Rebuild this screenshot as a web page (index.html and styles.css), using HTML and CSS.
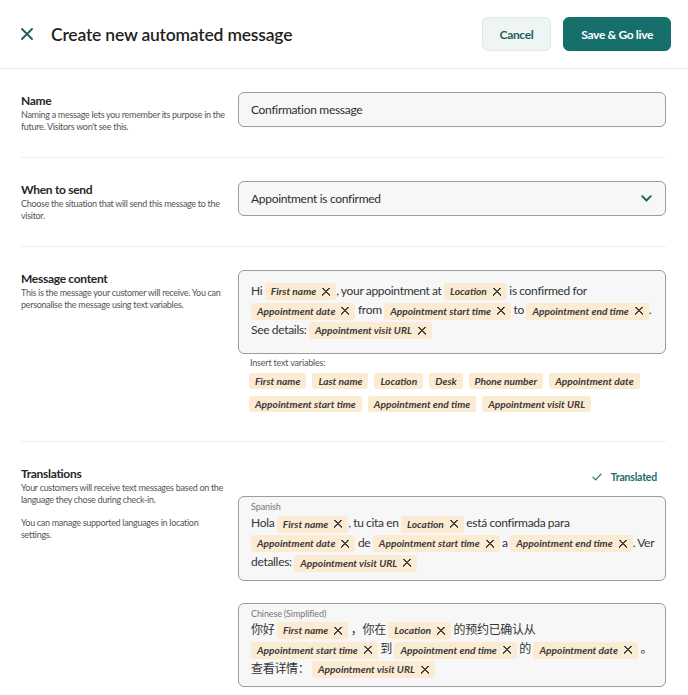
FILE: index.html
```html
<!DOCTYPE html>
<html lang="en">
<head>
    <meta charset="UTF-8">
    <meta name="viewport" content="width=device-width, initial-scale=1.0">
    <title>Create new automated message</title>
    <link rel="stylesheet" href="styles.css">
</head>
<body>
    <header class="topbar">
        <div class="topbar-title">
            <button class="close-btn" aria-label="Close">
                <svg width="12" height="12" viewBox="0 0 12 12"><path d="M1 1L11 11M11 1L1 11" stroke="currentColor" stroke-width="1.8" stroke-linecap="round"/></svg>
            </button>
            <h1>Create new automated message</h1>
        </div>
        <div class="topbar-actions">
            <button class="btn btn-secondary">Cancel</button>
            <button class="btn btn-primary">Save &amp; Go live</button>
        </div>
    </header>

    <main class="form">
        <section class="field-row">
            <div class="field-info">
                <h2>Name</h2>
                <p>Naming a message lets you remember its purpose in the future. Visitors won't see this.</p>
            </div>
            <div class="field-control">
                <input class="text-input" type="text" value="Confirmation message">
            </div>
        </section>

        <section class="field-row">
            <div class="field-info">
                <h2>When to send</h2>
                <p>Choose the situation that will send this message to the visitor.</p>
            </div>
            <div class="field-control">
                <div class="select">
                    <span>Appointment is confirmed</span>
                    <svg width="11" height="7" viewBox="0 0 11 7"><path d="M1.2 1.2L5.5 5.5L9.8 1.2" fill="none" stroke="currentColor" stroke-width="1.8" stroke-linecap="round" stroke-linejoin="round"/></svg>
                </div>
            </div>
        </section>

        <section class="field-row">
            <div class="field-info">
                <h2>Message content</h2>
                <p>This is the message your customer will receive. You can personalise the message using text variables.</p>
            </div>
            <div class="field-control">
                <div class="editor">
                    Hi <span class="chip">First name <i class="chip-x"></i></span>, your appointment at <span class="chip">Location <i class="chip-x"></i></span> is confirmed for
                    <span class="chip">Appointment date <i class="chip-x"></i></span> from <span class="chip">Appointment start time <i class="chip-x"></i></span> to <span class="chip">Appointment end time <i class="chip-x"></i></span>.
                    See details: <span class="chip">Appointment visit URL <i class="chip-x"></i></span>
                </div>
                <div class="variables-label">Insert text variables:</div>
                <div class="variables">
                    <span class="var">First name</span>
                    <span class="var">Last name</span>
                    <span class="var">Location</span>
                    <span class="var">Desk</span>
                    <span class="var">Phone number</span>
                    <span class="var">Appointment date</span>
                    <span class="var">Appointment start time</span>
                    <span class="var">Appointment end time</span>
                    <span class="var">Appointment visit URL</span>
                </div>
            </div>
        </section>

        <section class="field-row">
            <div class="field-info">
                <h2>Translations</h2>
                <p>Your customers will receive text messages based on the language they chose during check-in.</p>
                <p class="spaced">You can manage supported languages in location settings.</p>
            </div>
            <div class="field-control">
                <div class="translated">
                    <svg width="10" height="8" viewBox="0 0 10 8"><path d="M1 4.2L3.6 6.8L9 1.2" fill="none" stroke="currentColor" stroke-width="1.2" stroke-linecap="round" stroke-linejoin="round"/></svg>
                    Translated
                </div>
                <div class="editor translation">
                    <div class="lang">Spanish</div>
                    Hola <span class="chip">First name <i class="chip-x"></i></span>, tu cita en <span class="chip">Location <i class="chip-x"></i></span> está confirmada para
                    <span class="chip">Appointment date <i class="chip-x"></i></span> de <span class="chip">Appointment start time <i class="chip-x"></i></span> a <span class="chip">Appointment end time <i class="chip-x"></i></span>. Ver detalles: <span class="chip">Appointment visit URL <i class="chip-x"></i></span>
                </div>
                <div class="editor translation">
                    <div class="lang">Chinese (Simplified)</div>
                    你好 <span class="chip">First name <i class="chip-x"></i></span> ，你在 <span class="chip">Location <i class="chip-x"></i></span> 的预约已确认从
                    <span class="chip">Appointment start time <i class="chip-x"></i></span> 到 <span class="chip">Appointment end time <i class="chip-x"></i></span> 的 <span class="chip">Appointment date <i class="chip-x"></i></span> 。查看详情： <span class="chip">Appointment visit URL <i class="chip-x"></i></span>
                </div>
            </div>
        </section>
    </main>
</body>
</html>
```

FILE: styles.css
```css
body {
    font-family: Lato, "Noto Sans CJK SC", sans-serif;
    margin: 0;
    padding: 0;
    background-color: #fff;
    color: #2b2b2b;
}
button {
    font-family: inherit;
}
.topbar {
    display: flex;
    justify-content: space-between;
    align-items: center;
    height: 69px;
    padding: 0 17px 0 21px;
    border-bottom: 1px solid #eeeeee;
    box-sizing: border-box;
}
.topbar-title {
    display: flex;
    align-items: center;
    gap: 18px;
}
.close-btn {
    background: none;
    border: none;
    padding: 0;
    color: #1b5e5a;
    display: flex;
}
.topbar h1 {
    margin: 0;
    font-size: 17.5px;
    letter-spacing: -0.2px;
    font-weight: 600;
    color: #1f1f1f;
}
.topbar-actions {
    display: flex;
    gap: 12px;
}
.btn {
    height: 34px;
    border-radius: 6px;
    font-size: 12px;
    letter-spacing: -0.35px;
    font-weight: 700;
    padding: 0 17px;
    cursor: pointer;
}
.btn-secondary {
    background-color: #eef5f3;
    border: 1px solid #dfe9e6;
    color: #1c5f5c;
}
.btn-primary {
    background-color: #166f6b;
    border: 1px solid #166f6b;
    color: #fff;
}
.form {
    padding: 0 22px 0 21px;
}
.field-row {
    display: grid;
    grid-template-columns: 205px 1fr;
    column-gap: 12px;
    padding: 23px 0 24px;
    border-bottom: 1px solid #efefef;
}
.field-row:last-child {
    border-bottom: none;
}
.field-control {
    padding-bottom: 5px;
}
.field-info h2 {
    margin: 0;
    font-size: 12px;
    letter-spacing: -0.3px;
    line-height: 17px;
    font-weight: 700;
    color: #262626;
}
.field-info p {
    margin: 0;
    font-size: 9px;
    letter-spacing: -0.3px;
    line-height: 12px;
    color: #555;
}
.field-info p.spaced {
    margin-top: 11px;
}
.text-input,
.select {
    width: 100%;
    box-sizing: border-box;
    height: 35px;
    border: 1px solid #9d9d9d;
    border-radius: 6px;
    background-color: #f7f7f7;
    padding: 0 12px;
    font-family: inherit;
    font-size: 12px;
    letter-spacing: -0.3px;
    color: #2e2e2e;
}
.select {
    display: flex;
    align-items: center;
    justify-content: space-between;
}
.select svg {
    color: #1b5e5a;
    margin-right: 1px;
}
.editor {
    border: 1px solid #9d9d9d;
    border-radius: 6px;
    background-color: #f7f7f7;
    padding: 10px 6px 14px 12px;
    font-size: 12px;
    letter-spacing: -0.3px;
    word-spacing: -0.3px;
    line-height: 19px;
    color: #333;
}
.chip {
    display: inline-flex;
    align-items: center;
    gap: 6px;
    height: 17px;
    padding: 0 6px;
    border-radius: 3px;
    background-color: #fcebd3;
    font-size: 10.2px;
    letter-spacing: 0;
    word-spacing: normal;
    font-weight: 700;
    font-style: italic;
    color: #3a3a3a;
    vertical-align: middle;
    white-space: nowrap;
}
.chip-x {
    display: inline-block;
    width: 8px;
    height: 8px;
    background:
        linear-gradient(45deg, transparent 45%, #444 45%, #444 57%, transparent 57%),
        linear-gradient(-45deg, transparent 45%, #444 45%, #444 57%, transparent 57%);
}
.variables-label {
    margin: 3px 0 4px 12px;
    font-size: 9px;
    letter-spacing: -0.2px;
    line-height: 12px;
    color: #555;
}
.variables {
    display: flex;
    flex-wrap: wrap;
    gap: 7px 6px;
    padding-left: 11px;
}
.var {
    height: 16px;
    line-height: 16px;
    padding: 0 6px;
    border-radius: 3px;
    background-color: #fcebd3;
    font-size: 10.2px;
    letter-spacing: 0;
    font-weight: 700;
    font-style: italic;
    color: #3a3a3a;
}
.translated {
    display: flex;
    justify-content: flex-end;
    align-items: center;
    gap: 9px;
    height: 24px;
    margin-bottom: 7px;
    padding-right: 9px;
    font-size: 10.5px;
    letter-spacing: -0.2px;
    font-weight: 700;
    color: #1c6e69;
}
.translation {
    padding: 4px 6px 8px 12px;
    margin-bottom: 22px;
}
.lang {
    font-size: 9px;
    line-height: 12px;
    letter-spacing: -0.1px;
    color: #777;
}
```
